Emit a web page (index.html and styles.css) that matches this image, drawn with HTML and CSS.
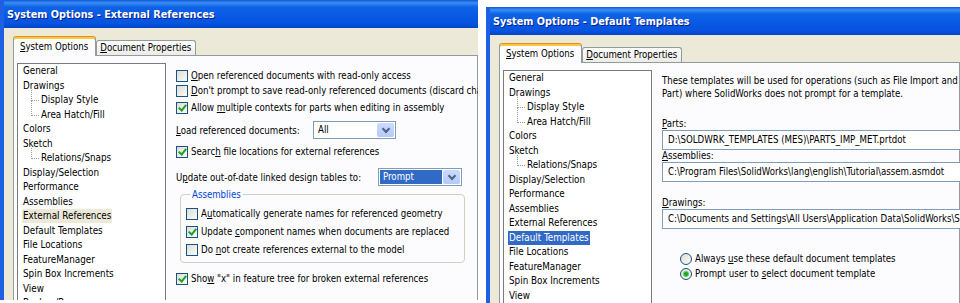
FILE: index.html
```html
<!DOCTYPE html>
<html>
<head>
    <title>System Options</title>
    <link rel="stylesheet" href="styles.css">
</head>
<body>
    <div class="screens">
        <section class="dialog dialog-ext">
            <div class="titlebar">System Options - External References</div>
            <div class="client">
                <div class="tabs">
                    <span class="tab active"><u>S</u>ystem Options</span>
                    <span class="tab"><u>D</u>ocument Properties</span>
                </div>
                <div class="page">
                    <ul class="tree">
                        <li>General</li>
                        <li>Drawings</li>
                        <li class="sub">Display Style</li>
                        <li class="sub">Area Hatch/Fill</li>
                        <li>Colors</li>
                        <li>Sketch</li>
                        <li class="sub">Relations/Snaps</li>
                        <li>Display/Selection</li>
                        <li>Performance</li>
                        <li>Assemblies</li>
                        <li class="sel"><span>External References</span></li>
                        <li>Default Templates</li>
                        <li>File Locations</li>
                        <li>FeatureManager</li>
                        <li>Spin Box Increments</li>
                        <li>View</li>
                        <li>Backup/Recover</li>
                    </ul>
                    <div class="opts">
                        <div class="row"><span class="check"></span><span><u>O</u>pen referenced documents with read-only access</span></div>
                        <div class="row"><span class="check"></span><span><u>D</u>on't prompt to save read-only referenced documents (discard changes)</span></div>
                        <div class="row row-gap"><span class="check on"></span><span>Allow <u>m</u>ultiple contexts for parts when editing in assembly</span></div>
                        <div class="row combo-row load-row">
                            <span class="combo-label load-label"><u>L</u>oad referenced documents:</span>
                            <span class="combo load-combo"><span class="value">All</span><span class="drop"></span></span>
                        </div>
                        <div class="row search-row"><span class="check on"></span><span>Searc<u>h</u> file locations for external references</span></div>
                        <div class="row combo-row update-row">
                            <span class="combo-label update-label">U<u>p</u>date out-of-date linked design tables to:</span>
                            <span class="combo update-combo"><span class="value picked">Prompt</span><span class="drop"></span></span>
                        </div>
                        <fieldset class="group">
                            <legend>Assemblies</legend>
                            <div class="row"><span class="check"></span><span>A<u>u</u>tomatically generate names for referenced geometry</span></div>
                            <div class="row group-gap"><span class="check on"></span><span>Update <u>c</u>omponent names when documents are replaced</span></div>
                            <div class="row group-gap"><span class="check"></span><span>Do <u>n</u>ot create references external to the model</span></div>
                        </fieldset>
                        <div class="row show-row"><span class="check on"></span><span>Sho<u>w</u> "x" in feature tree for broken external references</span></div>
                    </div>
                </div>
            </div>
        </section>

        <section class="dialog dialog-tpl">
            <div class="titlebar">System Options - Default Templates</div>
            <div class="client">
                <div class="tabs">
                    <span class="tab active"><u>S</u>ystem Options</span>
                    <span class="tab"><u>D</u>ocument Properties</span>
                </div>
                <div class="page">
                    <ul class="tree">
                        <li>General</li>
                        <li>Drawings</li>
                        <li class="sub">Display Style</li>
                        <li class="sub">Area Hatch/Fill</li>
                        <li>Colors</li>
                        <li>Sketch</li>
                        <li class="sub">Relations/Snaps</li>
                        <li>Display/Selection</li>
                        <li>Performance</li>
                        <li>Assemblies</li>
                        <li>External References</li>
                        <li class="sel focus"><span>Default Templates</span></li>
                        <li>File Locations</li>
                        <li>FeatureManager</li>
                        <li>Spin Box Increments</li>
                        <li>View</li>
                    </ul>
                    <div class="opts">
                        <p class="intro">These templates will be used for operations (such as File Import and New<br>Part) where SolidWorks does not prompt for a template.</p>
                        <div class="field-label parts-label"><u>P</u>arts:</div>
                        <div class="field">D:\SOLDWRK_TEMPLATES (MES)\PARTS_IMP_MET.prtdot</div>
                        <div class="field-label"><u>A</u>ssemblies:</div>
                        <div class="field">C:\Program Files\SolidWorks\lang\english\Tutorial\assem.asmdot</div>
                        <div class="field-label drawings-label"><u>D</u>rawings:</div>
                        <div class="field">C:\Documents and Settings\All Users\Application Data\SolidWorks\SolidWorks 2006\templates\Drawing.drwdot</div>
                        <div class="row radio-row first-radio"><span class="radio"></span><span>Always <u>u</u>se these default document templates</span></div>
                        <div class="row radio-row"><span class="radio on"></span><span>Prompt user to <u>s</u>elect document template</span></div>
                    </div>
                </div>
            </div>
        </section>
    </div>
</body>
</html>
```

FILE: styles.css
```css
* {
    margin: 0;
    padding: 0;
    box-sizing: border-box;
}

body {
    background: #fff;
    font-family: "DejaVu Sans Condensed", "DejaVu Sans", sans-serif;
    font-size: 9.6px;
    color: #000;
    overflow: hidden;
}

.screens {
    display: flex;
    align-items: flex-start;
    width: 960px;
    height: 303px;
    overflow: hidden;
}

.dialog {
    flex: none;
    display: flex;
    flex-direction: column;
    background: #ece9d8;
    border-left: 4px solid #1f5fe4;
    overflow: hidden;
}

.dialog-ext {
    width: 478px;
    height: 300px;
}

.dialog-tpl {
    width: 474px;
    height: 296px;
    margin-left: 8px;
    margin-top: 7px;
}

.titlebar {
    flex: none;
    height: 28px;
    line-height: 30px;
    padding-left: 3px;
    color: #fff;
    font-size: 10.8px;
    font-weight: bold;
    white-space: nowrap;
    text-shadow: 1px 1px #0a1e8c;
    background: linear-gradient(#0b5ad8 0%, #3c8df5 10%, #0d63e6 25%, #0858e4 60%, #0653df 85%, #0445c8 100%);
}

.client {
    flex: 1;
    display: flex;
    flex-direction: column;
    padding: 8px 0 0 9px;
    min-height: 0;
}

.tabs {
    flex: none;
    display: flex;
    align-items: flex-end;
    height: 19px;
    position: relative;
    z-index: 1;
}

.tab {
    height: 15px;
    line-height: 13px;
    padding: 0 4px 0 3px;
    border: 1px solid #919b9c;
    border-bottom: 0;
    border-radius: 3px 3px 0 0;
    background: linear-gradient(#fefefe, #ecebe5);
    white-space: nowrap;
}

.tab.active {
    height: 20px;
    margin-bottom: -1px;
    padding: 3px 7px 0 6px;
    line-height: 14px;
    border-top-color: #e68b2c;
    background: #fcfcfe;
    box-shadow: inset 0 2px #ffc73c;
}

.page {
    flex: 1;
    display: flex;
    min-height: 0;
    padding: 7px 0 0 3px;
    border: 1px solid #919b9c;
    border-bottom: 0;
    background: #fcfcfe;
}

.tree {
    flex: none;
    width: 149px;
    height: 260px;
    list-style: none;
    border: 1px solid #7a7a7a;
    background: #fff;
    font-size: 9.8px;
}

.tree li {
    position: relative;
    height: 14.5px;
    line-height: 14.5px;
    padding-left: 5px;
    white-space: nowrap;
}

.tree li.sub {
    padding-left: 23px;
}

.tree li.sub::before {
    content: "";
    position: absolute;
    left: 13px;
    top: -3px;
    width: 7px;
    height: 10px;
    border-left: 1px dotted #9a9a9a;
    border-bottom: 1px dotted #9a9a9a;
}

.tree li.sub + li.sub::before {
    top: -7px;
    height: 14px;
}

.tree li.sel span {
    margin-left: -1px;
    padding: 1px 1px 2px;
    background: #ece9d8;
}

.tree li.sel.focus span {
    background: #316ac5;
    color: #fff;
}

.opts {
    flex: 1;
    min-width: 0;
    margin-left: 10px;
    padding-top: 5px;
}

.row {
    display: flex;
    align-items: center;
    height: 15px;
    white-space: nowrap;
}

.row-gap {
    margin-top: 2px;
}

.group-gap {
    margin-top: 3px;
}

.check {
    flex: none;
    display: flex;
    align-items: center;
    justify-content: center;
    width: 12px;
    height: 12px;
    margin-right: 3px;
    border: 1px solid #1c5180;
    background: linear-gradient(135deg, #dcdcd7, #fbfbf9);
}

.check.on::after {
    content: "";
    width: 3px;
    height: 6px;
    margin-top: -2px;
    border: solid #21a121;
    border-width: 0 2px 2px 0;
    transform: rotate(40deg);
}

.combo-row {
    height: 18px;
}

.load-row {
    margin-top: 6px;
}

.search-row {
    margin-top: 5px;
}

.update-row {
    margin-top: 9px;
}

.combo-label {
    flex: none;
}

.load-label {
    width: 137px;
}

.update-label {
    width: 202px;
}

.combo {
    flex: none;
    display: flex;
    height: 18px;
    border: 1px solid #7f9db9;
    background: #fff;
}

.load-combo {
    width: 83px;
}

.update-combo {
    width: 84px;
}

.combo .value {
    flex: 1;
    margin: 1px;
    padding-left: 3px;
    line-height: 14px;
}

.combo .value.picked {
    background: #316ac5;
    color: #fff;
}

.combo .drop {
    flex: none;
    display: flex;
    align-items: center;
    justify-content: center;
    width: 17px;
    margin: 1px 1px 1px 0;
    border-radius: 2px;
    background: linear-gradient(#cbdbfd, #b3c9f7);
}

.combo .drop::after {
    content: "";
    width: 4px;
    height: 4px;
    margin-top: -3px;
    border: solid #4d6185;
    border-width: 0 2px 2px 0;
    transform: rotate(45deg);
}

.group {
    width: 285px;
    margin: 2px 0 0 4px;
    padding: 5px 0 5px 5px;
    border: 1px solid #d0d0bf;
    border-radius: 4px;
}

.group legend {
    margin-left: 4px;
    padding: 0 2px;
    line-height: 13px;
    color: #0046d5;
}

.show-row {
    margin-top: 8px;
}

.intro {
    margin-top: -1px;
    line-height: 13px;
    white-space: nowrap;
}

.field-label {
    line-height: 12px;
    white-space: nowrap;
}

.parts-label {
    margin-top: 18px;
}

.drawings-label {
    margin-top: 15px;
}

.field {
    width: 420px;
    height: 20px;
    padding-left: 5px;
    line-height: 18px;
    border: 1px solid #7f9db9;
    background: #fff;
    white-space: nowrap;
    overflow: hidden;
}

.radio-row {
    margin-left: 18px;
}

.first-radio {
    margin-top: 22px;
}

.radio {
    flex: none;
    display: flex;
    align-items: center;
    justify-content: center;
    width: 12px;
    height: 12px;
    margin-right: 3px;
    border: 1px solid #1c5180;
    border-radius: 50%;
    background: linear-gradient(135deg, #dcdcd7, #fbfbf9);
}

.radio.on::after {
    content: "";
    width: 4px;
    height: 4px;
    border-radius: 50%;
    background: #21a121;
    box-shadow: 0 0 0 1px #5fce5f;
}
```
